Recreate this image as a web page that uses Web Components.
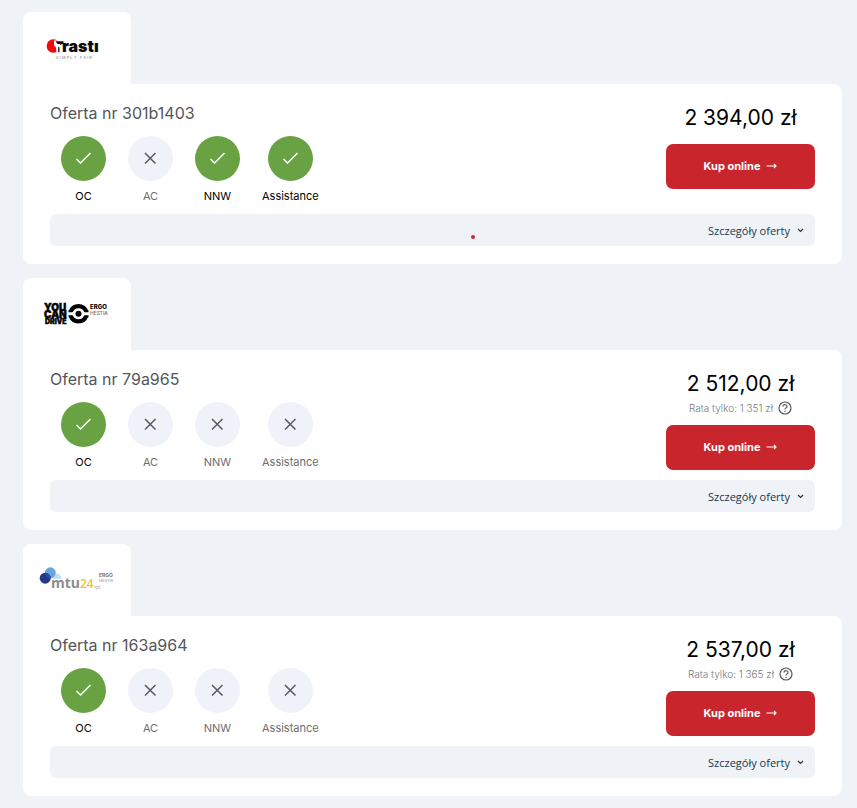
<!DOCTYPE html>
<html lang="pl">
<head>
<meta charset="utf-8">
<meta name="viewport" content="width=device-width, initial-scale=1">
<title>Oferty ubezpieczenia</title>
<style>
  body { margin: 0; background: #eff2f7; font-family: Inter, "Open Sans", sans-serif; color: #000; }
</style>
</head>
<body>
<offer-list>
  <offer-card number="301b1403" price="2 394,00 zł" covers="OC,NNW,Assistance" marker>
    <brand-logo slot="logo" name="trasti"></brand-logo>
  </offer-card>
  <offer-card number="79a965" price="2 512,00 zł" rate="1 351 zł" covers="OC">
    <brand-logo slot="logo" name="ycd"></brand-logo>
  </offer-card>
  <offer-card number="163a964" price="2 537,00 zł" rate="1 365 zł" covers="OC">
    <brand-logo slot="logo" name="mtu"></brand-logo>
  </offer-card>
</offer-list>

<script>
class OfferList extends HTMLElement {
  constructor() {
    super();
    this.attachShadow({ mode: "open" }).innerHTML = `
      <style>
        :host { display: flex; flex-direction: column; gap: 14px; padding: 12px 15px 12px 23px; }
      </style>
      <slot></slot>`;
  }
}

const LOGOS = {
  trasti: `
    <svg viewBox="0 0 108 72" role="img" aria-label="Trasti">
      <circle cx="30.3" cy="34" r="6.7" fill="#f60808"/>
      <path d="M31 28.500h6v12h-3.500l-.5-5-2-2z" fill="#fff"/>
      <path d="M32.500 29.200h8v2.800h-2.200v1.500l-1.600-1.500h-2.200z" fill="#111"/>
      <path d="M35.200 34.500l1.300 1v4.700h-1.300z" fill="#111"/>
      <text x="39" y="40" font-family="Inter, sans-serif" font-size="16" font-weight="900" fill="#0b0b0b">rastı</text>
      <text x="33" y="46.500" font-family="Inter, sans-serif" font-size="4" fill="#777" xml:space="preserve">S I M P L Y   F A I R</text>
    </svg>`,
  ycd: `
    <svg viewBox="0 0 108 72" role="img" aria-label="You Can Drive ERGO Hestia">
      <g font-family="Inter, sans-serif" font-weight="900" fill="#000" stroke="#000" stroke-width=".4">
        <text x="21" y="32.500" font-size="10">YOU</text>
        <text x="21" y="40" font-size="10">CAN</text>
        <text x="22" y="46" font-size="7">DRIVE</text>
      </g>
      <g fill="none" stroke="#000">
        <path d="M47.800 33.500A8.200 8.200 0 0 1 63.200 33.500M47.800 38A8.200 8.200 0 0 0 63.200 38" stroke-width="4.200"/>
        <path d="M45.500 33.300h3.500M62 33.300h3.500M45.500 38.200h3.500M62 38.200h3.500" stroke-width="2"/>
      </g>
      <circle cx="55.500" cy="35.700" r="3" fill="#000"/>
      <text x="67" y="31" font-family="Inter, sans-serif" font-size="6" font-weight="800">ERGO</text>
      <text x="67" y="36.500" font-family="Inter, sans-serif" font-size="5" font-weight="300">HESTIA</text>
    </svg>`,
  mtu: `
    <svg viewBox="0 0 108 72" role="img" aria-label="mtu24.pl ERGO Hestia">
      <path d="M30 35c0-4 4-7 7-4l2 4z" fill="#c3e0f5"/>
      <circle cx="27.300" cy="28.800" r="5.500" fill="#69a5de"/>
      <circle cx="22.200" cy="34.200" r="5.500" fill="#24358a"/>
      <path d="M22 28.800a5.500 5.500 0 0 1 5.600 5.400 5.500 5.500 0 0 1-5.600-5.400z" fill="#1f529f"/>
      <g font-family="'Open Sans', sans-serif">
        <text x="28" y="44" font-size="14" font-weight="700" fill="#8d8c89">mtu</text>
        <text x="57" y="44" font-size="12" font-weight="600" fill="#f2bf38">24.</text>
        <text x="73" y="45" font-size="5" fill="#a3a3a3">pl</text>
      </g>
      <text x="76" y="33" font-family="Inter, sans-serif" font-size="5" font-weight="700" fill="#777">ERGO</text>
      <text x="76" y="37.500" font-family="Inter, sans-serif" font-size="4" font-weight="400" fill="#888">HESTIA</text>
    </svg>`
};

class BrandLogo extends HTMLElement {
  connectedCallback() {
    if (this.shadowRoot) return;
    this.attachShadow({ mode: "open" }).innerHTML = `
      <style>
        :host { display: block; width: 108px; height: 72px; }
        svg { display: block; width: 100%; height: 100%; }
      </style>${LOGOS[this.getAttribute("name")] || ""}`;
  }
}

class CoverBadge extends HTMLElement {
  connectedCallback() {
    if (this.shadowRoot) return;
    const icon = this.hasAttribute("included")
      ? `<path d="M15.500 23l4 4L29.500 17" stroke="#fff" stroke-width="1.500"/>`
      : `<path d="M17 17l10.500 10.500M27.500 17L17 27.500" stroke="#55595f" stroke-width="1.500"/>`;
    this.attachShadow({ mode: "open" }).innerHTML = `
      <style>
        :host { display: flex; flex-direction: column; align-items: center; gap: 7px;
                min-width: 45px; font-size: 11px; line-height: 16px; color: #6b6d70; }
        :host([included]) { color: #000; }
        .disc { width: 45px; height: 45px; border-radius: 50%; background: #eff2f8; }
        :host([included]) .disc { background: #68a242; }
        svg { display: block; fill: none; }
      </style>
      <div class="disc"><svg width="45" height="45" viewBox="0 0 45 45" aria-hidden="true">${icon}</svg></div>
      <slot></slot>`;
  }
}

class OfferCard extends HTMLElement {
  connectedCallback() {
    if (this.shadowRoot) return;
    const covered = this.getAttribute("covers").split(",");
    const badges = ["OC", "AC", "NNW", "Assistance"]
      .map(n => `<cover-badge ${covered.includes(n) ? "included" : ""}>${n}</cover-badge>`).join("");
    const rate = this.getAttribute("rate");
    this.attachShadow({ mode: "open" }).innerHTML = `
      <style>
        :host { display: block; }
        .tab { width: 108px; background: #fff; border-radius: 8px 8px 0 0; }
        .body { background: #fff; border-radius: 0 8px 8px 8px; padding: 18px 27px; }
        .top { display: flex; justify-content: space-between; min-height: 112px; }
        h2 { margin: 0 0 11px; font-size: 16px; line-height: 23px; font-weight: 400; color: #54565a; }
        .covers { display: flex; gap: 22px; padding-left: 11px; }
        .buy { width: 149px; display: flex; flex-direction: column; align-items: center; }
        .price { font-size: 21px; line-height: 32px; white-space: nowrap; }
        .rate { display: flex; align-items: center; gap: 5px; margin-bottom: 9px;
                font-size: 10px; line-height: 16px; font-weight: 300; color: #77797c; white-space: nowrap; }
        .price:has(+ .action) { margin-bottom: 10px; }
        button { font-family: inherit; border: 0; cursor: pointer; }
        .help { display: block; padding: 0; background: none; }
        .action { display: flex; align-items: center; justify-content: center; gap: 6px;
                  width: 100%; height: 45px; padding: 0 0 2px; border-radius: 7px; background: #c9252c;
                  color: #fff; font-size: 11px; font-weight: 700; }
        .details { position: relative; display: flex; align-items: center; justify-content: flex-end; gap: 6px;
                   width: 100%; height: 32px; padding: 0 10px; border-radius: 6px;
                   background: #eff2f7; color: #20384a; font-family: "Open Sans", sans-serif; font-size: 11px; }
        .marker { position: absolute; left: 55%; bottom: 7px; width: 4px; height: 4px;
                  border-radius: 50%; background: #cf2932; }
        svg { display: block; fill: none; }
      </style>
      <div class="tab"><slot name="logo"></slot></div>
      <div class="body">
        <div class="top">
          <div>
            <h2>Oferta nr ${this.getAttribute("number")}</h2>
            <div class="covers">${badges}</div>
          </div>
          <div class="buy">
            <div class="price">${this.getAttribute("price")}</div>
            ${rate ? `<div class="rate"><span>Rata tylko: ${rate}</span>
              <button class="help" type="button" aria-label="Informacja o racie">
                <svg width="14" height="14" viewBox="0 0 14 14" stroke="#55575a" stroke-width="1.200">
                  <circle cx="7" cy="7" r="6"/>
                  <path d="M5 5.600C5 3.100 9 3.100 9 5.400 9 6.900 7 6.900 7 8.500M7 9.700v1.200"/>
                </svg>
              </button></div>` : ""}
            <button class="action" type="button">Kup online
              <svg width="11" height="8" viewBox="0 0 11 8" stroke="#fff" stroke-width="1.200" aria-hidden="true">
                <path d="M.5 4h9.500M8 2L10 4 8 6"/>
              </svg>
            </button>
          </div>
        </div>
        <button class="details" type="button">
          ${this.hasAttribute("marker") ? `<span class="marker"></span>` : ""}
          Szczegóły oferty
          <svg width="9" height="8" viewBox="0 0 9 8" stroke="#20384a" stroke-width="1.200" aria-hidden="true">
            <path d="M2 3l2.500 2.500L7 3"/>
          </svg>
        </button>
      </div>`;
  }
}

customElements.define("brand-logo", BrandLogo);
customElements.define("cover-badge", CoverBadge);
customElements.define("offer-card", OfferCard);
customElements.define("offer-list", OfferList);
</script>
</body>
</html>
